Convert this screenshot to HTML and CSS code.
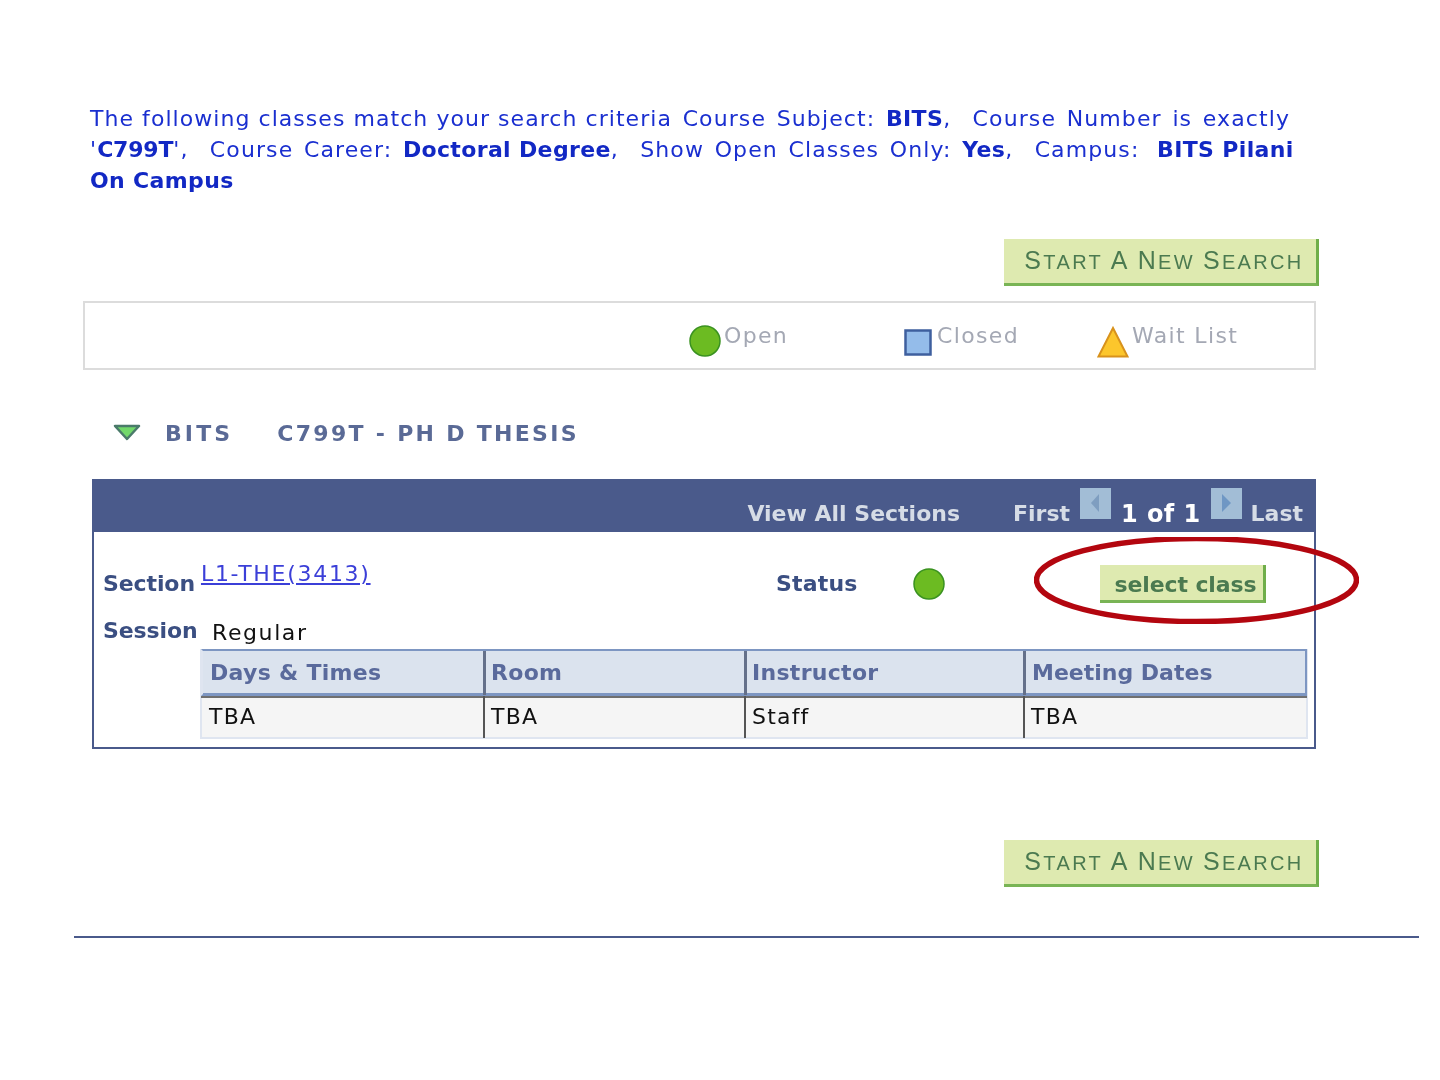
FILE: index.html
```html
<!DOCTYPE html>
<html lang="en">
<head>
<meta charset="utf-8">
<title>Class Search Results</title>
<link rel="stylesheet" href="styles.css">
</head>
<body>
<main class="page">
  <div class="criteria">
    <p class="line"><span class="lead">The following classes match your search criteria</span> Course Subject: <b>BITS</b>,&nbsp; Course Number is exactly</p>
    <p class="line">'<b class="code">C799T</b>',&nbsp; Course Career: <b>Doctoral Degree</b>,&nbsp; Show Open Classes Only: <b>Yes</b>,&nbsp; Campus: <b class="campus">BITS Pilani</b></p>
    <p class="line"><b>On Campus</b></p>
  </div>
  <div class="action-row"><a class="btn-search"><span class="btn-label"><span class="cap">S</span>TART <span class="cap">A</span> <span class="cap">N</span>EW <span class="cap">S</span>EARCH</span></a></div>
  <section class="legend">
    <div class="legend-item legend-open">
      <svg class="ico-circle" viewBox="0 0 32 32"><ellipse cx="16" cy="16" rx="15" ry="15" fill="#6cbb22" stroke="#3a9220" stroke-width="1.5"/></svg>
      <span>Open</span>
    </div>
    <div class="legend-item legend-closed">
      <svg class="ico-square" viewBox="0 0 28 27"><rect x="1.5" y="1.5" width="25" height="24" fill="#94bcea" stroke="#3e5f9e" stroke-width="2.5"/></svg>
      <span>Closed</span>
    </div>
    <div class="legend-item legend-wait">
      <svg class="ico-tri" viewBox="0 0 32 32"><path d="M16 2 L30.5 30.5 L1.5 30.5 Z" fill="#fcc62c" stroke="#d8921c" stroke-width="2"/></svg>
      <span>Wait List</span>
    </div>
  </section>
  <h2 class="course-title">
    <svg class="ico-collapse" viewBox="0 0 28 17"><path d="M2 2 L26 2 L14 15 Z" fill="#72d86a" stroke="#4a7a6a" stroke-width="2.5" stroke-linejoin="round"/></svg>
    <span class="subject">BITS</span><span class="course-name">C799T - PH D THESIS</span>
  </h2>
  <section class="sections">
    <header class="sections-head">
      <span class="view-all">View All Sections</span>
      <span class="pager">First</span>
      <svg class="ico-nav ico-prev" viewBox="0 0 31 31"><rect width="31" height="31" fill="#a2bdd6"/><path d="M19 6 V24 L11 15 Z" fill="#7f9ec0"/></svg>
      <span class="count">1 of 1</span>
      <svg class="ico-nav ico-next" viewBox="0 0 31 31"><rect width="31" height="31" fill="#a2bdd6"/><path d="M11 6 V24 L20 15 Z" fill="#6f97c4"/></svg>
      <span class="pager">Last</span>
    </header>
    <div class="section-body">
      <div class="row-section">
        <b class="label">Section</b>
        <a class="section-link">L1-THE(3413)</a>
        <b class="label status">Status</b>
        <svg class="ico-circle status-ico" viewBox="0 0 32 32"><ellipse cx="16" cy="16" rx="15" ry="15" fill="#6cbb22" stroke="#3a9220" stroke-width="1.5"/></svg>
        <a class="btn-select">select class</a>
      </div>
      <div class="row-session">
        <b class="label">Session</b>
        <span class="session-value">Regular</span>
      </div>
      <div class="meetings">
        <div class="meet-head">
          <div class="th">Days &amp; Times</div>
          <div class="th">Room</div>
          <div class="th">Instructor</div>
          <div class="th">Meeting Dates</div>
        </div>
        <div class="meet-row">
          <div class="td">TBA</div>
          <div class="td">TBA</div>
          <div class="td">Staff</div>
          <div class="td">TBA</div>
        </div>
      </div>
    </div>
    <svg class="callout" viewBox="0 0 325 87"><ellipse cx="162.5" cy="43" rx="160" ry="41.5" fill="none" stroke="#b3060f" stroke-width="5.5"/></svg>
  </section>
  <div class="action-row action-bottom"><a class="btn-search"><span class="btn-label"><span class="cap">S</span>TART <span class="cap">A</span> <span class="cap">N</span>EW <span class="cap">S</span>EARCH</span></a></div>
  <hr class="rule">
</main>
</body>
</html>
```
FILE: styles.css
```css
* { box-sizing: border-box; }
html, body { margin: 0; padding: 0; background: #fff; }
body { font-family: "DejaVu Sans", Verdana, sans-serif; height: 1080px; overflow: hidden; }
.page { padding: 103px 21px 0 74px; filter: blur(0.45px); }

.criteria { margin: 0 0 0 16px; font-size: 22px; line-height: 31px; color: #1a2fd0; letter-spacing: 1.1px; word-spacing: 2.6px; }
.line { margin: 0; white-space: nowrap; }
.lead { letter-spacing: 1.05px; word-spacing: 0; }
.criteria b { color: #1228c4; font-weight: 700; letter-spacing: 0.35px; word-spacing: 0; }
.criteria .code { letter-spacing: -0.2px; }
.criteria .campus { margin-left: 7px; }

.action-row { display: flex; justify-content: flex-end; margin-top: 43px; margin-right: 100px; }
.action-bottom { margin-top: 91px; }
.btn-search { display: flex; align-items: center; justify-content: center; width: 315px; height: 47px; padding: 0 0 2px 8px; background: #deeab0; border-right: 3px solid #6fae4a; border-bottom: 3px solid #79b455; color: #4b7a50; font-family: "Liberation Sans", Arial, sans-serif; font-size: 20px; letter-spacing: 2.35px; }
.btn-label { white-space: pre; }
.cap { font-size: 25px; }

.legend { position: relative; display: flex; height: 69px; margin: 15px 103px 0 9px; border: 2px solid #dcdcdc; }
.legend-item { position: absolute; top: 20px; display: flex; align-items: flex-start; color: #a4a8b4; font-size: 22px; line-height: 26px; letter-spacing: 1.35px; }
.legend-open { left: 604px; }
.legend-open span { margin-left: 3px; }
.legend-closed { left: 819px; }
.legend-closed span { margin-left: 5px; }
.legend-wait { left: 1012px; }
.legend-wait span { margin-left: 1px; }
.ico-circle { width: 32px; height: 32px; margin-top: 2px; display: block; }
.ico-square { width: 28px; height: 27px; margin-top: 6px; display: block; }
.ico-tri { width: 32px; height: 32px; margin-top: 3px; margin-right: 2px; display: block; }

.course-title { display: flex; align-items: center; margin: 50px 0 0 39px; height: 28px; font-size: 22px; font-weight: 700; line-height: 28px; letter-spacing: 2.3px; color: #5a6a96; font-family: "DejaVu Sans", Verdana, sans-serif; }
.ico-collapse { width: 28px; height: 17px; margin: -4px 24px 0 0; flex: none; }
.subject { margin-right: 44px; letter-spacing: 3.1px; }

.sections { position: relative; width: 1224px; height: 270px; margin: 31px 0 0 18px; border: 2px solid #4a5a8b; border-top: 0; }
.sections-head { display: flex; align-items: flex-end; justify-content: flex-end; height: 53px; margin: 0 -2px; padding: 0 13px 4px 0; background: #4a5a8b; color: #d6dce6; font-size: 22px; font-weight: 700; line-height: 28px; letter-spacing: 0; }
.view-all { margin-right: 53px; }
.ico-nav { width: 31px; height: 31px; margin-bottom: 9px; flex: none; }
.ico-prev { margin-left: 10px; margin-right: 10px; }
.ico-next { margin-left: 10px; margin-right: 9px; }
.count { color: #fff; font-size: 24px; letter-spacing: 0.4px; }

.section-body { padding: 0 8px 0 9px; }
.label { color: #3b4f82; font-size: 22px; line-height: 28px; letter-spacing: -0.1px; }
.row-section { display: flex; align-items: flex-start; height: 84px; padding-top: 38px; }
.section-link { flex: none; margin: -10px 0 0 6px; width: 575px; color: #3b3fd8; font-size: 22px; line-height: 28px; letter-spacing: 1.7px; text-decoration: underline; }
.status { flex: none; width: 137px; letter-spacing: 0.2px; }
.status-ico { margin-top: -2px; flex: none; }
.btn-select { display: flex; align-items: center; justify-content: center; width: 166px; height: 38px; margin: -5px 0 0 155px; padding: 4px 0 0 8px; background: #deeab0; border-right: 3px solid #6fae4a; border-bottom: 3px solid #79b455; color: #4b7a50; font-size: 22px; font-weight: 700; letter-spacing: -0.1px; line-height: 28px; }
.row-session { display: flex; align-items: flex-start; height: 33px; }
.row-session .label { width: 109px; margin-top: 1px; }
.session-value { margin-top: 3px; color: #111; font-size: 22px; line-height: 28px; letter-spacing: 1.6px; }

.meetings { margin-left: 97px; width: 1108px; border: 2px solid #dfe5f0; border-top: 0; background: #f5f5f5; }
.meet-head, .meet-row { display: grid; grid-template-columns: 283px 261px 279px 1fr; }
.meet-head { height: 47px; margin: 0 -1px; background: #dbe3ee; border-top: 2px solid #7d96c2; border-right: 2px solid #7d96c2; border-left: 2px solid #dfe5f0; border-bottom: 2px solid #7d96c2; box-shadow: inset 0 -1px 0 #7d96c2, 0 2px 0 #6f6f6f; }
.th { padding-left: 5px; color: #5a6a9c; font-size: 22px; font-weight: 700; line-height: 44px; letter-spacing: 0.3px; border-right: 3px solid #64708a; }
.th:first-child { padding-left: 7px; }
.th:last-child { padding-left: 6px; letter-spacing: 0; border-right: 0; }
.meet-row { height: 41px; padding-bottom: 2px; }
.td { padding-left: 6px; color: #111; font-size: 22px; line-height: 42px; letter-spacing: 1.2px; border-right: 2px solid #555; }
.td:first-child { padding-left: 7px; }
.td:last-child { border-right: 0; }

.callout { position: absolute; left: 940px; top: 58px; width: 325px; height: 87px; }

.rule { height: 2px; margin: 49px 0 0; border: 0; background: #4a5a8b; }
```
